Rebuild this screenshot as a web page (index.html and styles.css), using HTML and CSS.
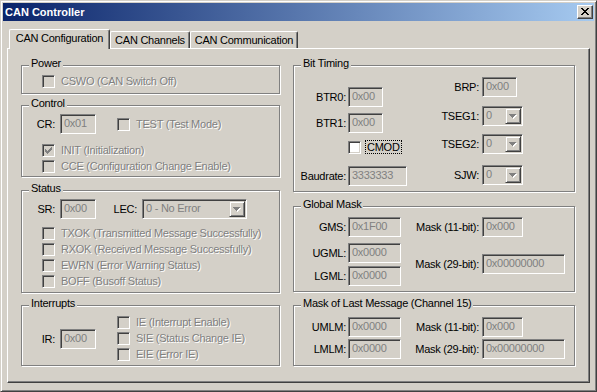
FILE: index.html
```html
<!DOCTYPE html>
<html lang="en">
<head>
  <meta charset="UTF-8" />
  <title>CAN Controller</title>
  <link rel="stylesheet" href="styles.css">
</head>
<body>

<div class="window">
  <div class="titlebar">
    <span class="title">CAN Controller</span>
    <div class="close">
      <svg width="8" height="7" viewBox="0 0 8 7" shape-rendering="crispEdges"><path fill="#000" d="M0 0h2v1H0zM6 0h2v1H6zM1 1h2v1H1zM5 1h2v1H5zM2 2h4v1H2zM3 3h2v1H3zM2 4h4v1H2zM1 5h2v1H1zM5 5h2v1H5zM0 6h2v1H0zM6 6h2v1H6z"/></svg>
    </div>
  </div>

  <div class="client">
    <div class="tabs">
      <div class="tab active">CAN Configuration</div>
      <div class="tab tab-channels">CAN Channels</div>
      <div class="tab tab-comm">CAN Communication</div>
    </div>

    <div class="page">
      <!-- left column -->
      <div class="col col-left">
        <div class="group g-power">
          <span class="legend">Power</span>
          <div class="check-row"><span class="checkbox"></span><span class="dis">CSWO (CAN Switch Off)</span></div>
        </div>

        <div class="group g-control">
          <span class="legend">Control</span>
          <div class="field-row">
            <span class="lbl">CR:</span>
            <div class="edit w36">0x01</div>
            <span class="checkbox ml21"></span>
            <span class="dis ml6">TEST (Test Mode)</span>
          </div>
          <div class="check-row ind mt10">
            <span class="checkbox"><svg class="tick" width="7" height="7" viewBox="0 0 7 7" shape-rendering="crispEdges"><path fill="#808080" d="M6 0h1v1H6zM5 1h2v1H5zM0 2h1v1H0zM4 2h3v1H4zM0 3h2v1H0zM3 3h3v1H3zM0 4h5v1H0zM1 5h3v1H1zM2 6h1v1H2z"/></svg></span>
            <span class="dis">INIT (Initialization)</span>
          </div>
          <div class="check-row ind mt3"><span class="checkbox"></span><span class="dis">CCE (Configuration Change Enable)</span></div>
        </div>

        <div class="group g-status">
          <span class="legend">Status</span>
          <div class="field-row">
            <span class="lbl">SR:</span>
            <div class="edit w36">0x00</div>
            <span class="lbl-lec">LEC:</span>
            <div class="combo w105">
              <span class="combo-text">0 - No Error</span>
              <span class="drop"><svg width="8" height="5" viewBox="0 0 8 5" shape-rendering="crispEdges"><path fill="#fff" d="M1 1h7v1H1zM2 2h5v1H2zM3 3h3v1H3zM4 4h1v1H4z"/><path fill="#808080" d="M0 0h7v1H0zM1 1h5v1H1zM2 2h3v1H2zM3 3h1v1H3z"/></svg></span>
            </div>
          </div>
          <div class="check-row ind mt8"><span class="checkbox"></span><span class="dis">TXOK (Transmitted Message Successfully)</span></div>
          <div class="check-row ind mt3"><span class="checkbox"></span><span class="dis">RXOK (Received Message Successfully)</span></div>
          <div class="check-row ind mt3"><span class="checkbox"></span><span class="dis">EWRN (Error Warning Status)</span></div>
          <div class="check-row ind mt3"><span class="checkbox"></span><span class="dis">BOFF (Busoff Status)</span></div>
        </div>

        <div class="group g-irq">
          <span class="legend">Interrupts</span>
          <div class="irq-row">
            <div class="field-row">
              <span class="lbl">IR:</span>
              <div class="edit w36">0x00</div>
            </div>
            <div class="irq-checks">
              <div class="check-row"><span class="checkbox"></span><span class="dis">IE (Interrupt Enable)</span></div>
              <div class="check-row"><span class="checkbox"></span><span class="dis">SIE (Status Change IE)</span></div>
              <div class="check-row"><span class="checkbox"></span><span class="dis">EIE (Error IE)</span></div>
            </div>
          </div>
        </div>
      </div>

      <!-- right column -->
      <div class="col col-right">
        <div class="group g-bit">
          <span class="legend">Bit Timing</span>
          <div class="sub">
            <div class="sub-left">
              <div class="field-row mt21"><span class="lbl2">BTR0:</span><div class="edit w35">0x00</div></div>
              <div class="field-row mt6"><span class="lbl2">BTR1:</span><div class="edit w35">0x00</div></div>
              <div class="cmod-row mt7">
                <span class="lbl2"></span>
                <span class="checkbox on"></span>
                <span class="focus">CMOD</span>
              </div>
              <div class="field-row mt12"><span class="lbl2">Baudrate:</span><div class="edit w59">3333333</div></div>
            </div>
            <div class="sub-right">
              <div class="field-row mt11"><span class="lbl3">BRP:</span><div class="edit w35">0x00</div></div>
              <div class="field-row mt9"><span class="lbl3">TSEG1:</span>
                <div class="combo w41"><span class="combo-text">0</span>
                  <span class="drop"><svg width="8" height="5" viewBox="0 0 8 5" shape-rendering="crispEdges"><path fill="#fff" d="M1 1h7v1H1zM2 2h5v1H2zM3 3h3v1H3zM4 4h1v1H4z"/><path fill="#808080" d="M0 0h7v1H0zM1 1h5v1H1zM2 2h3v1H2zM3 3h1v1H3z"/></svg></span>
                </div>
              </div>
              <div class="field-row mt8"><span class="lbl3">TSEG2:</span>
                <div class="combo w41"><span class="combo-text">0</span>
                  <span class="drop"><svg width="8" height="5" viewBox="0 0 8 5" shape-rendering="crispEdges"><path fill="#fff" d="M1 1h7v1H1zM2 2h5v1H2zM3 3h3v1H3zM4 4h1v1H4z"/><path fill="#808080" d="M0 0h7v1H0zM1 1h5v1H1zM2 2h3v1H2zM3 3h1v1H3z"/></svg></span>
                </div>
              </div>
              <div class="field-row mt11"><span class="lbl3">SJW:</span>
                <div class="combo w41"><span class="combo-text">0</span>
                  <span class="drop"><svg width="8" height="5" viewBox="0 0 8 5" shape-rendering="crispEdges"><path fill="#fff" d="M1 1h7v1H1zM2 2h5v1H2zM3 3h3v1H3zM4 4h1v1H4z"/><path fill="#808080" d="M0 0h7v1H0zM1 1h5v1H1zM2 2h3v1H2zM3 3h1v1H3z"/></svg></span>
                </div>
              </div>
            </div>
          </div>
        </div>

        <div class="group g-global">
          <span class="legend">Global Mask</span>
          <div class="sub">
            <div class="sub-left">
              <div class="field-row mt10"><span class="lbl2">GMS:</span><div class="edit w53">0x1F00</div></div>
              <div class="field-row mt6"><span class="lbl2">UGML:</span><div class="edit w53">0x0000</div></div>
              <div class="field-row mt3"><span class="lbl2">LGML:</span><div class="edit w53">0x0000</div></div>
            </div>
            <div class="sub-right">
              <div class="field-row mt10"><span class="lbl3">Mask (11-bit):</span><div class="edit w41">0x000</div></div>
              <div class="field-row mt17"><span class="lbl3">Mask (29-bit):</span><div class="edit w83">0x00000000</div></div>
            </div>
          </div>
        </div>

        <div class="group g-last">
          <span class="legend">Mask of Last Message (Channel 15)</span>
          <div class="sub">
            <div class="sub-left">
              <div class="field-row mt11"><span class="lbl2">UMLM:</span><div class="edit w53">0x0000</div></div>
              <div class="field-row mt2"><span class="lbl2">LMLM:</span><div class="edit w53">0x0000</div></div>
            </div>
            <div class="sub-right">
              <div class="field-row mt11"><span class="lbl3">Mask (11-bit):</span><div class="edit w41">0x000</div></div>
              <div class="field-row mt2"><span class="lbl3">Mask (29-bit):</span><div class="edit w83">0x00000000</div></div>
            </div>
          </div>
        </div>
      </div>
    </div>
  </div>
</div>

</body>
</html>
```

FILE: styles.css
```css
* {
  box-sizing: border-box;
}
body {
  margin: 0;
  overflow: hidden;
  background: #d4d0c8;
  font-family: "Liberation Sans", Arial, sans-serif;
  font-size: 11px;
  letter-spacing: -0.25px;
  color: #000;
}

/* window frame */
.window {
  width: 597px;
  height: 392px;
  padding: 2px;
  background: #d4d0c8;
  border: 1px solid;
  border-color: #d4d0c8 #404040 #404040 #d4d0c8;
  box-shadow: inset 1px 1px #fff, inset -1px -1px #808080;
  display: flex;
  flex-direction: column;
}
.titlebar {
  height: 18px;
  flex: none;
  display: flex;
  align-items: center;
  justify-content: space-between;
  padding: 0 1px 0 2px;
  background: linear-gradient(to right, #0a246a, #a6caf0);
}
.title {
  color: #fff;
  font-weight: bold;
  letter-spacing: 0;
}
.close {
  width: 16px;
  height: 14px;
  padding: 2px 0 0 3px;
  background: #d4d0c8;
  border: 1px solid;
  border-color: #fff #404040 #404040 #fff;
  box-shadow: inset -1px -1px #808080;
}
.close svg {
  display: block;
}

/* tabs */
.client {
  flex: 1;
  padding: 8px 0 0 4px;
}
.tabs {
  display: flex;
  align-items: flex-end;
  height: 19px;
  padding-left: 2px;
}
.tab {
  height: 17px;
  padding-top: 2px;
  line-height: 13px;
  text-align: center;
  white-space: nowrap;
  background: #d4d0c8;
  border: 1px solid;
  border-bottom: none;
  border-color: #fff #404040 #404040 #fff;
  border-radius: 2px 2px 0 0;
  box-shadow: inset -1px 0 #808080;
}
.tab.active {
  width: 101px;
  height: 20px;
  margin-bottom: -1px;
  position: relative;
  z-index: 1;
}
.tab-channels {
  width: 80px;
}
.tab-comm {
  width: 108px;
}
.page {
  width: 583px;
  height: 335px;
  display: flex;
  gap: 13px;
  padding: 16px 0 0 13px;
  border: 1px solid;
  border-color: #fff #404040 #404040 #fff;
  box-shadow: inset -1px -1px #808080;
}

/* group boxes */
.col {
  display: flex;
  flex-direction: column;
}
.col-left {
  width: 259px;
}
.col-right {
  width: 282px;
}
.group {
  position: relative;
  flex: none;
  border: 1px solid #808080;
  box-shadow: inset 1px 1px #fff, 1px 1px #fff;
}
.legend {
  position: absolute;
  top: -9px;
  left: 7px;
  padding: 0 2px;
  line-height: 13px;
  white-space: nowrap;
  background: #d4d0c8;
}
.g-power {
  height: 29px;
  padding: 9px 0 0 20px;
}
.g-control {
  height: 72px;
  margin-top: 11px;
  padding-top: 8px;
}
.g-status {
  height: 103px;
  margin-top: 13px;
  padding-top: 8px;
}
.g-irq {
  height: 61px;
  margin-top: 12px;
  padding-top: 10px;
}
.g-bit {
  height: 127px;
}
.g-global {
  height: 86px;
  margin-top: 14px;
}
.g-last {
  height: 61px;
  margin-top: 13px;
}

/* rows */
.check-row {
  display: flex;
  align-items: center;
  gap: 6px;
  height: 13px;
  line-height: 13px;
  white-space: nowrap;
}
.field-row {
  display: flex;
  align-items: center;
  height: 20px;
  white-space: nowrap;
}
.ind {
  margin-left: 20px;
}
.lbl {
  width: 33px;
  margin-right: 5px;
  text-align: right;
}
.lbl-lec {
  width: 27px;
  margin: 0 5px 0 14px;
  text-align: right;
}
.irq-row {
  display: flex;
  align-items: center;
}
.irq-checks {
  display: flex;
  flex-direction: column;
  gap: 3px;
  margin-left: 21px;
}
.sub {
  display: flex;
}
.sub-left {
  width: 110px;
}
.lbl2 {
  width: 52px;
  margin-right: 2px;
  text-align: right;
  flex: none;
}
.lbl3 {
  width: 75px;
  margin-right: 3px;
  text-align: right;
  flex: none;
}
.cmod-row {
  display: flex;
  align-items: center;
  height: 14px;
}
.focus {
  margin-left: 4px;
  padding: 0 1px;
  height: 14px;
  line-height: 12px;
  border: 1px dotted #000;
}

/* controls */
.dis {
  color: #808080;
  text-shadow: 1px 1px 0 #fff;
}
.checkbox {
  width: 13px;
  height: 13px;
  flex: none;
  background: #d4d0c8;
  border: 1px solid;
  border-color: #808080 #fff #fff #808080;
  box-shadow: inset 1px 1px #404040, inset -1px -1px #d4d0c8;
}
.checkbox.on {
  background: #fff;
}
.tick {
  display: block;
  margin: 2px;
}
.edit {
  height: 20px;
  flex: none;
  padding-left: 3px;
  line-height: 16px;
  color: #808080;
  overflow: hidden;
  background: #d4d0c8;
  border: 1px solid;
  border-color: #808080 #fff #fff #808080;
  box-shadow: inset 1px 1px #404040, inset -1px -1px #d4d0c8;
}
.combo {
  height: 20px;
  flex: none;
  display: flex;
  padding: 1px;
  color: #808080;
  background: #d4d0c8;
  border: 1px solid;
  border-color: #808080 #fff #fff #808080;
  box-shadow: inset 1px 1px #404040, inset -1px -1px #d4d0c8;
}
.combo-text {
  flex: 1;
  padding-left: 2px;
  line-height: 15px;
  overflow: hidden;
}
.drop {
  width: 16px;
  height: 16px;
  flex: none;
  border: 1px solid;
  border-color: #d4d0c8 #404040 #404040 #d4d0c8;
  box-shadow: inset 1px 1px #fff, inset -1px -1px #808080;
}
.drop svg {
  display: block;
  margin: 5px 0 0 3px;
}

.w35 { width: 35px; }
.w36 { width: 36px; }
.w41 { width: 41px; }
.w53 { width: 53px; }
.w59 { width: 59px; }
.w83 { width: 83px; }
.w105 { width: 105px; }

.ml6 { margin-left: 6px; }
.ml21 { margin-left: 21px; }
.mt2 { margin-top: 2px; }
.mt3 { margin-top: 3px; }
.mt6 { margin-top: 6px; }
.mt7 { margin-top: 7px; }
.mt8 { margin-top: 8px; }
.mt9 { margin-top: 9px; }
.mt10 { margin-top: 10px; }
.mt11 { margin-top: 11px; }
.mt12 { margin-top: 12px; }
.mt17 { margin-top: 17px; }
.mt21 { margin-top: 21px; }
```
